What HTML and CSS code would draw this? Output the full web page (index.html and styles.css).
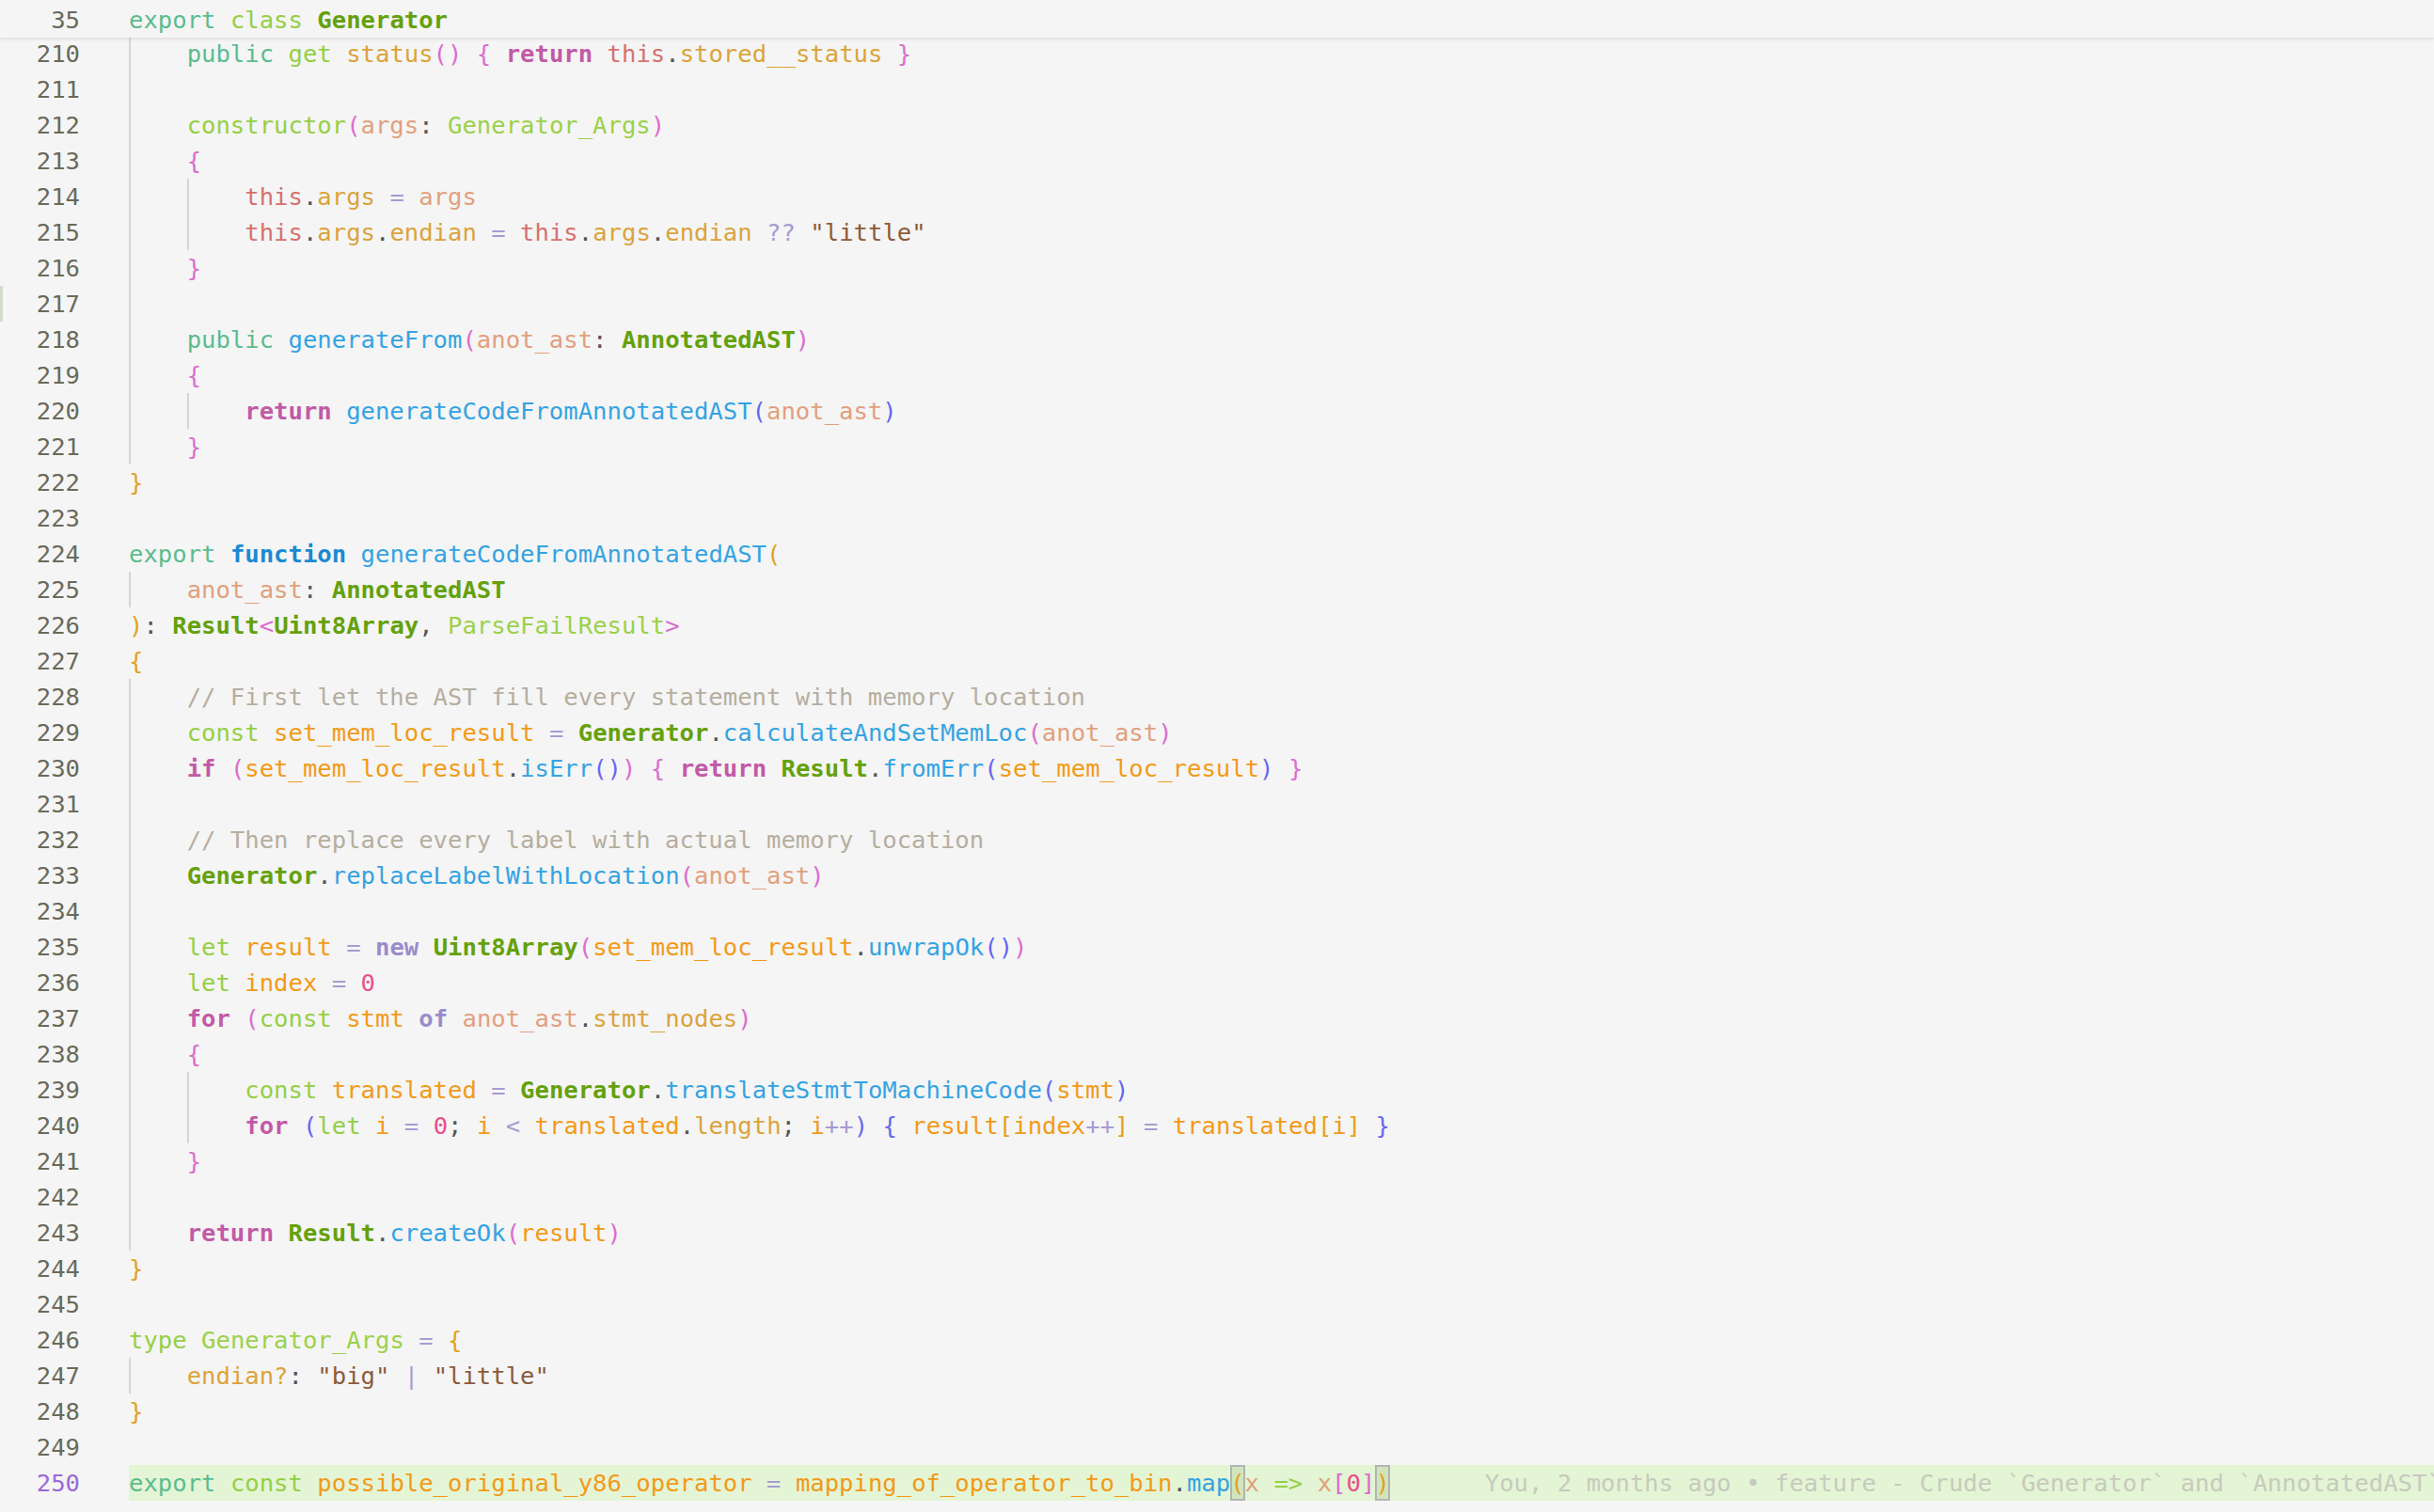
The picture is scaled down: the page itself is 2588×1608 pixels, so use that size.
FILE: index.html
```html
<!DOCTYPE html>
<html>
<head>
<meta charset="utf-8">
<link rel="stylesheet" href="styles.css">
</head>
<body>
<div class="editor">
  <div class="sticky"><span class="ln">35</span><span class="code"><span class="kx">export</span> <span class="kd">class</span> <span class="cls">Generator</span></span></div>
  <div class="lines">
    <div class="line"><span class="ln">210</span><span class="code"><span class="ind"></span><span class="kx">public</span> <span class="kd">get</span> <span class="pr">status</span><span class="b2">()</span> <span class="b2">{</span> <span class="kr">return</span> <span class="th">this</span>.<span class="pr">stored__status</span> <span class="b2">}</span></span></div>
    <div class="line"><span class="ln">211</span><span class="code"><span class="ind"></span></span></div>
    <div class="line"><span class="ln">212</span><span class="code"><span class="ind"></span><span class="kd">constructor</span><span class="b2">(</span><span class="pa">args</span>: <span class="ty">Generator_Args</span><span class="b2">)</span></span></div>
    <div class="line"><span class="ln">213</span><span class="code"><span class="ind"></span><span class="b2">{</span></span></div>
    <div class="line"><span class="ln">214</span><span class="code"><span class="ind"></span><span class="ind"></span><span class="th">this</span>.<span class="pr">args</span> <span class="op">=</span> <span class="pa">args</span></span></div>
    <div class="line"><span class="ln">215</span><span class="code"><span class="ind"></span><span class="ind"></span><span class="th">this</span>.<span class="pr">args</span>.<span class="pr">endian</span> <span class="op">=</span> <span class="th">this</span>.<span class="pr">args</span>.<span class="pr">endian</span> <span class="op">??</span> <span class="st">"little"</span></span></div>
    <div class="line"><span class="ln">216</span><span class="code"><span class="ind"></span><span class="b2">}</span></span></div>
    <div class="line"><span class="ln gm">217</span><span class="code"><span class="ind"></span></span></div>
    <div class="line"><span class="ln">218</span><span class="code"><span class="ind"></span><span class="kx">public</span> <span class="fn">generateFrom</span><span class="b2">(</span><span class="pa">anot_ast</span>: <span class="cls">AnnotatedAST</span><span class="b2">)</span></span></div>
    <div class="line"><span class="ln">219</span><span class="code"><span class="ind"></span><span class="b2">{</span></span></div>
    <div class="line"><span class="ln">220</span><span class="code"><span class="ind"></span><span class="ind"></span><span class="kr">return</span> <span class="fn">generateCodeFromAnnotatedAST</span><span class="b3">(</span><span class="pa">anot_ast</span><span class="b3">)</span></span></div>
    <div class="line"><span class="ln">221</span><span class="code"><span class="ind"></span><span class="b2">}</span></span></div>
    <div class="line"><span class="ln">222</span><span class="code"><span class="b1">}</span></span></div>
    <div class="line"><span class="ln">223</span><span class="code"></span></div>
    <div class="line"><span class="ln">224</span><span class="code"><span class="kx">export</span> <span class="kf">function</span> <span class="fn">generateCodeFromAnnotatedAST</span><span class="b1">(</span></span></div>
    <div class="line"><span class="ln">225</span><span class="code"><span class="ind"></span><span class="pa">anot_ast</span>: <span class="cls">AnnotatedAST</span></span></div>
    <div class="line"><span class="ln">226</span><span class="code"><span class="b1">)</span>: <span class="cls">Result</span><span class="b2">&lt;</span><span class="cls">Uint8Array</span>, <span class="ty">ParseFailResult</span><span class="b2">&gt;</span></span></div>
    <div class="line"><span class="ln">227</span><span class="code"><span class="b1">{</span></span></div>
    <div class="line"><span class="ln">228</span><span class="code"><span class="ind"></span><span class="cm">// First let the AST fill every statement with memory location</span></span></div>
    <div class="line"><span class="ln">229</span><span class="code"><span class="ind"></span><span class="kd">const</span> <span class="va">set_mem_loc_result</span> <span class="op">=</span> <span class="cls">Generator</span>.<span class="fn">calculateAndSetMemLoc</span><span class="b2">(</span><span class="pa">anot_ast</span><span class="b2">)</span></span></div>
    <div class="line"><span class="ln">230</span><span class="code"><span class="ind"></span><span class="kr">if</span> <span class="b2">(</span><span class="va">set_mem_loc_result</span>.<span class="fn">isErr</span><span class="b3">()</span><span class="b2">)</span> <span class="b2">{</span> <span class="kr">return</span> <span class="cls">Result</span>.<span class="fn">fromErr</span><span class="b3">(</span><span class="va">set_mem_loc_result</span><span class="b3">)</span> <span class="b2">}</span></span></div>
    <div class="line"><span class="ln">231</span><span class="code"><span class="ind"></span></span></div>
    <div class="line"><span class="ln">232</span><span class="code"><span class="ind"></span><span class="cm">// Then replace every label with actual memory location</span></span></div>
    <div class="line"><span class="ln">233</span><span class="code"><span class="ind"></span><span class="cls">Generator</span>.<span class="fn">replaceLabelWithLocation</span><span class="b2">(</span><span class="pa">anot_ast</span><span class="b2">)</span></span></div>
    <div class="line"><span class="ln">234</span><span class="code"><span class="ind"></span></span></div>
    <div class="line"><span class="ln">235</span><span class="code"><span class="ind"></span><span class="kd">let</span> <span class="va">result</span> <span class="op">=</span> <span class="kn">new</span> <span class="cls">Uint8Array</span><span class="b2">(</span><span class="va">set_mem_loc_result</span>.<span class="fn">unwrapOk</span><span class="b3">()</span><span class="b2">)</span></span></div>
    <div class="line"><span class="ln">236</span><span class="code"><span class="ind"></span><span class="kd">let</span> <span class="va">index</span> <span class="op">=</span> <span class="nu">0</span></span></div>
    <div class="line"><span class="ln">237</span><span class="code"><span class="ind"></span><span class="kr">for</span> <span class="b2">(</span><span class="kd">const</span> <span class="va">stmt</span> <span class="kn">of</span> <span class="pa">anot_ast</span>.<span class="pr">stmt_nodes</span><span class="b2">)</span></span></div>
    <div class="line"><span class="ln">238</span><span class="code"><span class="ind"></span><span class="b2">{</span></span></div>
    <div class="line"><span class="ln">239</span><span class="code"><span class="ind"></span><span class="ind"></span><span class="kd">const</span> <span class="va">translated</span> <span class="op">=</span> <span class="cls">Generator</span>.<span class="fn">translateStmtToMachineCode</span><span class="b3">(</span><span class="va">stmt</span><span class="b3">)</span></span></div>
    <div class="line"><span class="ln">240</span><span class="code"><span class="ind"></span><span class="ind"></span><span class="kr">for</span> <span class="b3">(</span><span class="kd">let</span> <span class="va">i</span> <span class="op">=</span> <span class="nu">0</span>; <span class="va">i</span> <span class="op">&lt;</span> <span class="va">translated</span>.<span class="pr">length</span>; <span class="va">i</span><span class="op">++</span><span class="b3">)</span> <span class="b3">{</span> <span class="va">result</span><span class="b1">[</span><span class="va">index</span><span class="op">++</span><span class="b1">]</span> <span class="op">=</span> <span class="va">translated</span><span class="b1">[</span><span class="va">i</span><span class="b1">]</span> <span class="b3">}</span></span></div>
    <div class="line"><span class="ln">241</span><span class="code"><span class="ind"></span><span class="b2">}</span></span></div>
    <div class="line"><span class="ln">242</span><span class="code"><span class="ind"></span></span></div>
    <div class="line"><span class="ln">243</span><span class="code"><span class="ind"></span><span class="kr">return</span> <span class="cls">Result</span>.<span class="fn">createOk</span><span class="b2">(</span><span class="va">result</span><span class="b2">)</span></span></div>
    <div class="line"><span class="ln">244</span><span class="code"><span class="b1">}</span></span></div>
    <div class="line"><span class="ln">245</span><span class="code"></span></div>
    <div class="line"><span class="ln">246</span><span class="code"><span class="kd">type</span> <span class="ty">Generator_Args</span> <span class="op">=</span> <span class="b1">{</span></span></div>
    <div class="line"><span class="ln">247</span><span class="code"><span class="ind"></span><span class="pr">endian?</span>: <span class="st">"big"</span> <span class="op">|</span> <span class="st">"little"</span></span></div>
    <div class="line"><span class="ln">248</span><span class="code"><span class="b1">}</span></span></div>
    <div class="line"><span class="ln">249</span><span class="code"></span></div>
    <div class="line cur"><span class="ln">250</span><span class="code"><span class="kx">export</span> <span class="kd">const</span> <span class="va">possible_original_y86_operator</span> <span class="op">=</span> <span class="va">mapping_of_operator_to_bin</span>.<span class="fn">map</span><span class="b1 mb">(</span><span class="pa">x</span> <span class="kd">=&gt;</span> <span class="pa">x</span><span class="b2">[</span><span class="nu">0</span><span class="b2">]</span><span class="b1 mb">)</span><span class="blame">You, 2 months ago • feature - Crude `Generator` and `AnnotatedAST`</span></span></div>
  </div>
</div>
</body>
</html>
```

FILE: styles.css
```css
html, body {
  margin: 0;
  padding: 0;
  background: #f5f5f5;
}

.editor {
  position: relative;
  height: 1608px;
  overflow: hidden;
  padding-top: 38px;
  box-sizing: border-box;
  font-family: "DejaVu Sans Mono", "Liberation Mono", monospace;
  font-size: 25.6px;
  color: #555555;
  background: #f5f5f5;
}

.sticky {
  position: absolute;
  top: 0;
  left: 0;
  right: 0;
  height: 40px;
  box-sizing: border-box;
  padding-top: 3px;
  display: flex;
  line-height: 36px;
  background: #f5f5f5;
  box-shadow: 0 2px 3px rgba(0, 0, 0, 0.09);
  z-index: 2;
  white-space: pre;
}

.line {
  display: flex;
  height: 38px;
  line-height: 38px;
  white-space: pre;
}

.ln {
  flex: none;
  width: 85px;
  box-sizing: border-box;
  text-align: right;
  color: #6a6a5a;
}

.gm {
  border-left: 3px solid #d3dccb;
}

.code {
  flex: 1;
  margin-left: 52px;
  white-space: pre;
  overflow: hidden;
}

.ind {
  display: inline-block;
  vertical-align: top;
  width: 4ch;
  height: 38px;
  box-sizing: border-box;
  border-left: 2px solid #d5d5d5;
}

.cur .ln { color: #9a6ad8; }
.cur .code { background: #e4f5d5; }

.mb {
  display: inline-block;
  vertical-align: top;
  height: 38px;
  background: #cfe6bc;
  box-shadow: inset 0 0 0 2px #b3b3b3;
}

.blame {
  padding-left: 101px;
  color: #c7cabd;
}

.kx { color: #5bbc8e; }
.kd { color: #94cf45; }
.cls { color: #64a10c; font-weight: bold; }
.ty { color: #9bd14a; }
.kr { color: #c25aa6; font-weight: bold; }
.kn { color: #9a8ccc; font-weight: bold; }
.kf { color: #1a8ad2; font-weight: bold; }
.fn { color: #34a3e2; }
.th { color: #d6716c; }
.pr { color: #dba33b; }
.pa { color: #e2a07c; }
.va { color: #f29a18; }
.st { color: #8c5a3a; }
.cm { color: #b6ae9f; }
.op { color: #a79bd2; }
.nu { color: #ea4f8c; }
.b1 { color: #e2a21e; }
.b2 { color: #db6cd0; }
.b3 { color: #6767f0; }
```
